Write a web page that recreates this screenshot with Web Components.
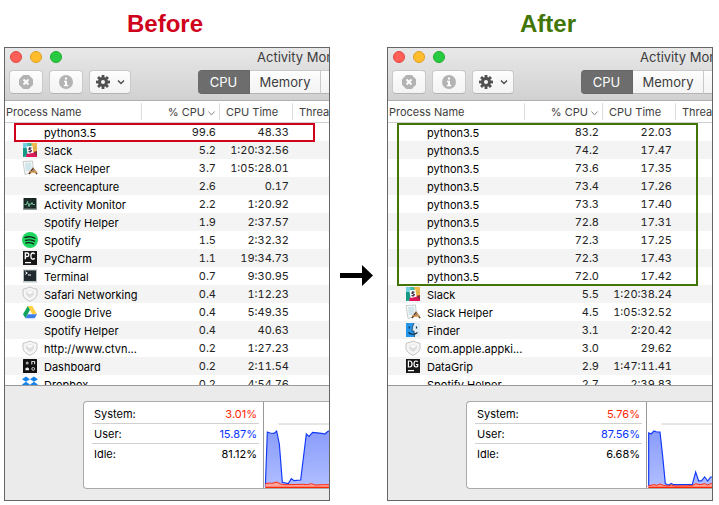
<!DOCTYPE html>
<html lang="en">
<head>
<meta charset="utf-8">
<title>Activity Monitor: before and after</title>
<style>
  body { margin: 0; background: #fff; font-family: Inter, "Liberation Sans", sans-serif; font-size: 11px; color: #000; }
</style>
</head>
<body>
<before-after></before-after>
<script>
const ICONS = {
  slack: '<rect width="14" height="14" fill="#2fb6a4"/><path d="M0 0h8L5 4 0 5z" fill="#46bfa7"/><path d="M8 0h6v5l-5-1z" fill="#efb74c"/><path d="M9 4l5 1v6l-4-1z" fill="#eeb142"/><path d="M0 0l4 0 1 5-5 1z" fill="#75cfdf"/><path d="M0 5l4 0 1 6-5 3z" fill="#159a85"/><path d="M3 14l1-4 10 0v4z" fill="#df1659"/><path d="M10 9l4-1v5z" fill="#8f2646"/><path d="M3.500 3.500l6-.8 1 7-6 1.300z" fill="#fff"/><path d="M8.500 5.200L6.500 5 5.900 6.300 8.300 7.500 7.600 8.900 5.500 8.700" fill="none" stroke="#3d2641" stroke-width="1.200"/>',
  helper: '<path d="M0 .5l9.500-.5 1 11-8.500 2.500z" fill="#f7f8f8" stroke="#bac0c3" stroke-width=".8"/><path d="M2 2l6-.5.8 8-6 1z" fill="#d2e5eb"/><path d="M6 13l4-5.500 4 5.500" fill="none" stroke="#5b3b25" stroke-width="1.600"/><path d="M6.500 10.800h7" stroke="#cc8b3e" stroke-width="1.600"/><path d="M10 7.500l3.500 4.500" stroke="#e0a75d"/>',
  monitor: '<rect y="1" width="14" height="12" fill="#8d9895"/><rect x="1" y="1" width="12" height="10.500" fill="#16251f"/><path d="M1 4h12M1 9.500h12M4 1v10M8 1v10" stroke="#31463e" stroke-width=".5"/><path d="M1.500 7.500h2l1-3 1.500 5 1-3 1 1 1-2 .7 2H12" fill="none" stroke="#84d4af" stroke-width=".9"/>',
  spotify: '<circle cx="7" cy="7" r="8" fill="#1ed760"/><path d="M2 4.500Q7 2.800 12 5.300M2.600 7.400Q7 6 11.400 8.200M3 10Q7 8.900 10.600 10.900" fill="none" stroke="#12291b" stroke-width="1.400" stroke-linecap="round"/>',
  pycharm: '<rect width="14" height="14" fill="#171717"/><path d="M2.300 8.300V2h2q1.500 0 1.500 1.700T4.300 5.500h-2M11.700 3Q10.800 2 9.800 2 7.900 2 7.900 5.100t1.900 3.100q1 0 1.900-1" fill="none" stroke="#fff" stroke-width="1.300"/><path d="M2 11.600h6" stroke="#fff" stroke-width="1.300"/>',
  datagrip: '<rect width="14" height="14" fill="#171717"/><path d="M2.400 2v6h1.300q2.300 0 2.300-3T3.700 2zM11.800 3Q11 2 9.900 2 8 2 8 5t1.900 3q1 0 1.800-.7V5.500H10" fill="none" stroke="#fff" stroke-width="1.200"/><path d="M2 11.600h6" stroke="#fff" stroke-width="1.300"/>',
  terminal: '<rect width="14" height="13" y=".5" fill="#b7c1c3"/><rect x="1" y="1.500" width="12" height="10.500" fill="#222a30"/><path d="M2.300 2.800l2 1.300-2 1.300M5 6h3" fill="none" stroke="#fff"/>',
  shield: '<path d="M7 0Q10 1.500 14 2.300v5.200Q13.600 11.500 7 14.300.400 11.500 0 7.500V2.300Q4 1.500 7 0z" fill="#f6f6f6" stroke="#c4c4c4"/><path d="M3 4.500Q5.500 4 7 3q1.500 1 4 1.500v2.700Q10.500 9 7 11 3.500 9 3 7.200z" fill="#dedede"/><path d="M3.500 5L7 7l3.500-2L7 4z" fill="#fff"/>',
  drive: '<path d="M4.700 1h4.700L14 9.200H9.300z" fill="#ffcf44"/><path d="M4.700 1L0 9.200 2.400 13.300 7 5z" fill="#0fa45c"/><path d="M4.700 9.200H14l-2.400 4.100H2.400z" fill="#3f7ee8"/>',
  dashboard: '<rect width="14" height="14" rx=".5" fill="#111"/><circle cx="4.200" cy="4" r="1.500" fill="#aaa"/><path d="M8.800 5.500V2.500h2.800v2.700" fill="none" stroke="#ccc" stroke-width="1.200"/><path d="M2.400 11.300V9.500l1.800-1.300L6 9.500v1.800z" fill="#eee"/><circle cx="10.200" cy="9.900" r="1.400" fill="none" stroke="#ccc"/>',
  dropbox: '<g transform="translate(-1.500 -.5) scale(1.210)"><path d="M3.700 0L7 2.200 3.700 4.400.400 2.200zM10.300 0l3.300 2.200-3.300 2.200L7 2.200zM3.700 4.400L7 6.600 3.700 8.800.400 6.600zM10.300 4.400l3.300 2.200-3.300 2.200L7 6.600zM7 7.500l3.300 2.200L7 12 3.700 9.700z" fill="#1583e8"/></g>',
  finder: '<rect width="14" height="14" rx="1" fill="#e2ecf3"/><path d="M0 0h8Q6 4 6 8h2l.5 6H0z" fill="#2596ea"/><path d="M8 0Q6 4 6 8h2l.5 6" fill="none" stroke="#174065" stroke-width=".8"/><path d="M3.300 3.500v2M10.500 3.500v2M2.500 9.500Q7 13 11.500 9.500" fill="none" stroke="#10283d" stroke-width="1.200"/>'
};
const icon = n => n ? `<svg viewBox="0 0 14 14" width="14" height="14" aria-hidden="true">${ICONS[n]}</svg>` : '';

class TrafficLights extends HTMLElement {
  connectedCallback() {
    this.attachShadow({ mode: 'open' }).innerHTML = `<style>
      :host { display: flex; gap: 8px; }
      button { width: 12px; height: 12px; padding: 0; border-radius: 50%; border: 1px solid #e2463f; background: #ff5f57; }
      .min { background: #ffbd2e; border-color: #dfa023; }
      .max { background: #28ca42; border-color: #1dad2b; }
    </style><button aria-label="Close"></button><button class="min" aria-label="Minimize"></button><button class="max" aria-label="Zoom"></button>`;
  }
}
customElements.define('traffic-lights', TrafficLights);

class ToolButton extends HTMLElement {
  connectedCallback() {
    this.attachShadow({ mode: 'open' }).innerHTML = `<style>
      :host { display: block; }
      button { display: flex; align-items: center; justify-content: center; gap: 7px; height: 24px; width: 34px; padding: 0;
        border: 1px solid #c9c9c9; border-bottom-color: #b5b5b5; border-radius: 4px; background: linear-gradient(#fdfdfd, #f3f3f3); }
      :host([wide]) button { width: 42px; }
    </style><button aria-label="${this.getAttribute('label')}"><slot></slot></button>`;
  }
}
customElements.define('tool-button', ToolButton);

class MonitorToolbar extends HTMLElement {
  connectedCallback() {
    const teeth = [0, 45, 90, 135].map(a => `<rect x="5.600" y="0" width="2.800" height="14" transform="rotate(${a} 7 7)"/>`).join('');
    this.attachShadow({ mode: 'open' }).innerHTML = `<style>
      :host { display: block; height: 52px; background: linear-gradient(#e8e8e8, #d1d1d1); border-bottom: 1px solid #b0b0b0; }
      .title, .tools { display: flex; align-items: center; white-space: nowrap; }
      .title { height: 18px; padding-left: 5px; }
      .title span { margin-left: 195px; font-size: 13px; color: #3c3c3c; }
      .tools { padding: 4px 0 0 4px; gap: 6px; }
      .tabs { display: flex; margin-left: 61px; }
      .tabs button { box-sizing: border-box; flex: none; height: 24px; padding: 0; width: 71px; font: 13px Inter, sans-serif; color: #3c3c3c;
        background: linear-gradient(#fdfdfd, #f3f3f3); border: 1px solid #c9c9c9; border-left-width: 0; border-bottom-color: #b5b5b5; }
      .tabs button:first-child { width: 52px; color: #fff; background: #6d6d6d; border-color: #666; border-radius: 4px 0 0 4px; }
    </style>
    <div class="title"><traffic-lights></traffic-lights><span>Activity Monitor</span></div>
    <div class="tools">
      <tool-button label="Quit process"><svg width="14" height="14"><path d="M4.200 0h5.600L14 4.200v5.600L9.800 14H4.200L0 9.800V4.200z" fill="#b3b3b3"/><path d="M4.500 4.500l5 5m0-5l-5 5" stroke="#fff" stroke-width="1.800"/></svg></tool-button>
      <tool-button label="Inspect process"><svg width="14" height="14"><circle cx="7" cy="7" r="7" fill="#b3b3b3"/><path d="M6 2.500h2v2H6zM5 5.800h3v4h1.300v1.400H4.800V9.800H6V7.200H5z" fill="#fff"/></svg></tool-button>
      <tool-button label="Actions" wide><svg width="14" height="14"><g fill="#505050">${teeth}<circle cx="7" cy="7" r="5"/></g><circle cx="7" cy="7" r="2" fill="#f8f8f8"/></svg><svg width="8" height="6"><path d="M1 1.500l3 3 3-3" fill="none" stroke="#505050" stroke-width="1.500"/></svg></tool-button>
      <div class="tabs"><button aria-pressed="true">CPU</button><button>Memory</button><button aria-label="Next tab"></button></div>
    </div>`;
  }
}
customElements.define('monitor-toolbar', MonitorToolbar);

class ProcessTable extends HTMLElement {
  set data({ rows, marked, color }) {
    this.attachShadow({ mode: 'open' }).innerHTML = `<style>
      :host { display: block; position: relative; height: 284px; overflow: hidden; background: #fff; border-bottom: 1px solid #999; }
      table { table-layout: fixed; width: 100%; min-width: 360px; border-collapse: separate; border-spacing: 0; white-space: nowrap; }
      .name { width: 137px; } .cpu { width: 78px; } .time { width: 73px; }
      th { box-sizing: border-box; height: 22px; padding: 0 0 0 6px; font-weight: 400; text-align: left; color: #404040; border-bottom: 1px solid #d0d0d0;
        background: linear-gradient(#ddd, #ddd) right 2px / 1px 17px no-repeat; }
      th:first-child { padding-left: 1px; }
      th:nth-child(2) { text-align: right; padding: 0 5px 0 0; }
      th button { font: inherit; color: inherit; border: 0; padding: 0; background: none; }
      td { height: 18px; padding: 0; line-height: 18px; }
      tr:nth-child(even) td { background: #f4f4f4; }
      .process { box-sizing: border-box; display: grid; grid-template: 18px / 14px 1fr; column-gap: 7px; align-items: center; height: 18px; padding-left: 18px; }
      .process span { grid-column: 2; padding-top: 1px; }
      svg { display: block; overflow: visible; }
      th svg { display: inline-block; margin-left: 3px; }
      .num { text-align: right; padding-right: 4px; color: #222; font-variant-numeric: tabular-nums; }
      .mark { position: absolute; box-sizing: border-box; top: 22px; left: 9px; width: 301px; height: ${marked * 18 + 1}px; border: 2px solid ${color}; pointer-events: none; }
    </style>
    <table><colgroup><col class="name"><col class="cpu"><col class="time"><col></colgroup>
    <thead><tr><th>Process Name</th><th><button>% CPU<svg width="7" height="5"><path d="M.5 .5l3 3.500 3-3.500" fill="none" stroke="#888"/></svg></button></th><th>CPU Time</th><th>Threads</th></tr></thead>
    <tbody>${rows.map(([i, n, c, t]) => `<tr><td><div class="process">${icon(i)}<span>${n}</span></div></td><td class="num">${c}</td><td class="num">${t}</td><td></td></tr>`).join('')}</tbody></table>
    <div class="mark"></div>`;
  }
}
customElements.define('process-table', ProcessTable);

class CpuSummary extends HTMLElement {
  set data({ system, user, idle, load, sys, view }) {
    this.attachShadow({ mode: 'open' }).innerHTML = `<style>
      :host { display: block; padding: 15px 0 11px 78px; background: #ebebeb; overflow: hidden; }
      .box { display: grid; grid-template-columns: 180px 1fr; height: 86px; border: 1px solid #aaa; border-right: 0; border-radius: 4px 0 0 4px; background: #fff; }
      dl { margin: 0; padding: 2px 4px 0 8px; border-right: 1px solid #999; }
      dl div { display: flex; justify-content: space-between; height: 19px; line-height: 20px; padding: 0 2px; border-bottom: 1px solid #d0d0d0; }
      dl div:last-child { border: 0; }
      dd { margin: 0; }
      .chart { position: relative; overflow: hidden; }
      svg { display: block; }
    </style>
    <div class="box"><dl>
      <div><dt>System:</dt><dd style="color:#ff2600">${system}</dd></div>
      <div><dt>User:</dt><dd style="color:#0a32ff">${user}</dd></div>
      <div><dt>Idle:</dt><dd>${idle}</dd></div></dl>
      <div class="chart"><svg width="66" height="86" viewBox="${view} 198 258" role="img" aria-label="CPU load">
        <defs><linearGradient id="g" x2="0" y2="1"><stop stop-color="#899cfb"/><stop offset="1" stop-color="#b3c0ff"/></linearGradient></defs>
        <g transform="translate(${view})"><path d="M43 66H198" stroke="#ccc" stroke-width="3"/></g>
        <path d="M${load}V330H586z" fill="url(#g)"/><path d="M${load}" fill="none" stroke="#1239f5" stroke-width="3.500"/>
        <path d="M${sys}V322H586z" fill="#ffa49b"/><path d="M${sys}" fill="none" stroke="#ff2a12" stroke-width="3"/>
        <g transform="translate(${view})"><path d="M4 256H198" stroke="#ff2600" stroke-width="4"/></g>
      </svg></div></div>`;
  }
}
customElements.define('cpu-summary', CpuSummary);

class MonitorWindow extends HTMLElement {
  set data(d) {
    this.attachShadow({ mode: 'open' }).innerHTML = `<style>
      :host { display: block; min-width: 0; }
      h2 { margin: 0; padding-right: 4px; font: bold 24px/47px "Liberation Sans", Arial, sans-serif; text-align: center; color: ${d.color}; }
      section { border: 1px solid #666; overflow: hidden; background: #ebebeb; }
    </style>
    <h2>${d.title}</h2><section><monitor-toolbar></monitor-toolbar><process-table></process-table><cpu-summary></cpu-summary></section>`;
    this.shadowRoot.querySelector('process-table').data = d;
    this.shadowRoot.querySelector('cpu-summary').data = d;
  }
}
customElements.define('monitor-window', MonitorWindow);

class BeforeAfter extends HTMLElement {
  connectedCallback() {
    this.attachShadow({ mode: 'open' }).innerHTML = `<style>
      :host { display: grid; grid-template-columns: minmax(0, 1fr) 57px minmax(0, 1fr); align-items: center; padding: 0 6px 0 4px; overflow: hidden; }
      .arrow { padding-top: 48px; }
      svg { display: block; }
    </style><monitor-window></monitor-window>
    <div class="arrow"><svg width="57" height="22" role="img" aria-label="becomes"><path d="M10 9h22V1l11 10.500L32 22v-8H10z"/></svg></div>
    <monitor-window></monitor-window>`;
    const [before, after] = this.shadowRoot.querySelectorAll('monitor-window');
    before.data = {
      title: 'Before', color: '#d0021b', marked: 1, system: '3.01%', user: '15.87%', idle: '81.12%', view: '582 64',
      load: '586 320L592 154 600 157 612 158 620 151 628 190 637 305 655 309 664 294 672 300 692 298 709 160 717 167 728 155 755 158 764 160 775 151 780 151',
      sys: '586 310L594 307 605 308 621 304 632 310 645 312 700 311 712 312 725 309 735 313 760 312 780 312',
      rows: [['', 'python3.5', '99.6', '48.33'], ['slack', 'Slack', '5.2', '1:20:32.56'], ['helper', 'Slack Helper', '3.7', '1:05:28.01'],
        ['', 'screencapture', '2.6', '0.17'], ['monitor', 'Activity Monitor', '2.2', '1:20.92'], ['', 'Spotify Helper', '1.9', '2:37.57'],
        ['spotify', 'Spotify', '1.5', '2:32.32'], ['pycharm', 'PyCharm', '1.1', '19:34.73'], ['terminal', 'Terminal', '0.7', '9:30.95'],
        ['shield', 'Safari Networking', '0.4', '1:12.23'], ['drive', 'Google Drive', '0.4', '5:49.35'], ['', 'Spotify Helper', '0.4', '40.63'],
        ['shield', 'http://www.ctvn...', '0.2', '1:27.23'], ['dashboard', 'Dashboard', '0.2', '2:11.54'], ['dropbox', 'Dropbox', '0.2', '4:54.76']]
    };
    after.data = {
      title: 'After', color: '#417505', marked: 9, system: '5.76%', user: '87.56%', idle: '6.68%', view: '591 67',
      load: '596 323L596 160 603 163 612 154 620 157 630 157 638 230 646 312 656 316 664 311 670 315 727 314 737 277 746 304 755 303 764 292 773 304 782 292 790 292',
      sys: '596 318L612 315 620 317 630 313 640 317 655 319 664 316 675 319 727 318 737 312 750 315 764 312 773 316 782 312 790 312',
      rows: [...[['83.2', '22.03'], ['74.2', '17.47'], ['73.6', '17.35'], ['73.4', '17.26'], ['73.3', '17.40'], ['72.8', '17.31'], ['72.3', '17.25'], ['72.3', '17.43'], ['72.0', '17.42']].map(r => ['', 'python3.5', ...r]),
        ['slack', 'Slack', '5.5', '1:20:38.24'], ['helper', 'Slack Helper', '4.5', '1:05:32.52'], ['finder', 'Finder', '3.1', '2:20.42'],
        ['shield', 'com.apple.appki...', '3.0', '29.62'], ['datagrip', 'DataGrip', '2.9', '1:47:11.41'], ['', 'Spotify Helper', '2.7', '2:39.83']]
    };
  }
}
customElements.define('before-after', BeforeAfter);
</script>
</body>
</html>
